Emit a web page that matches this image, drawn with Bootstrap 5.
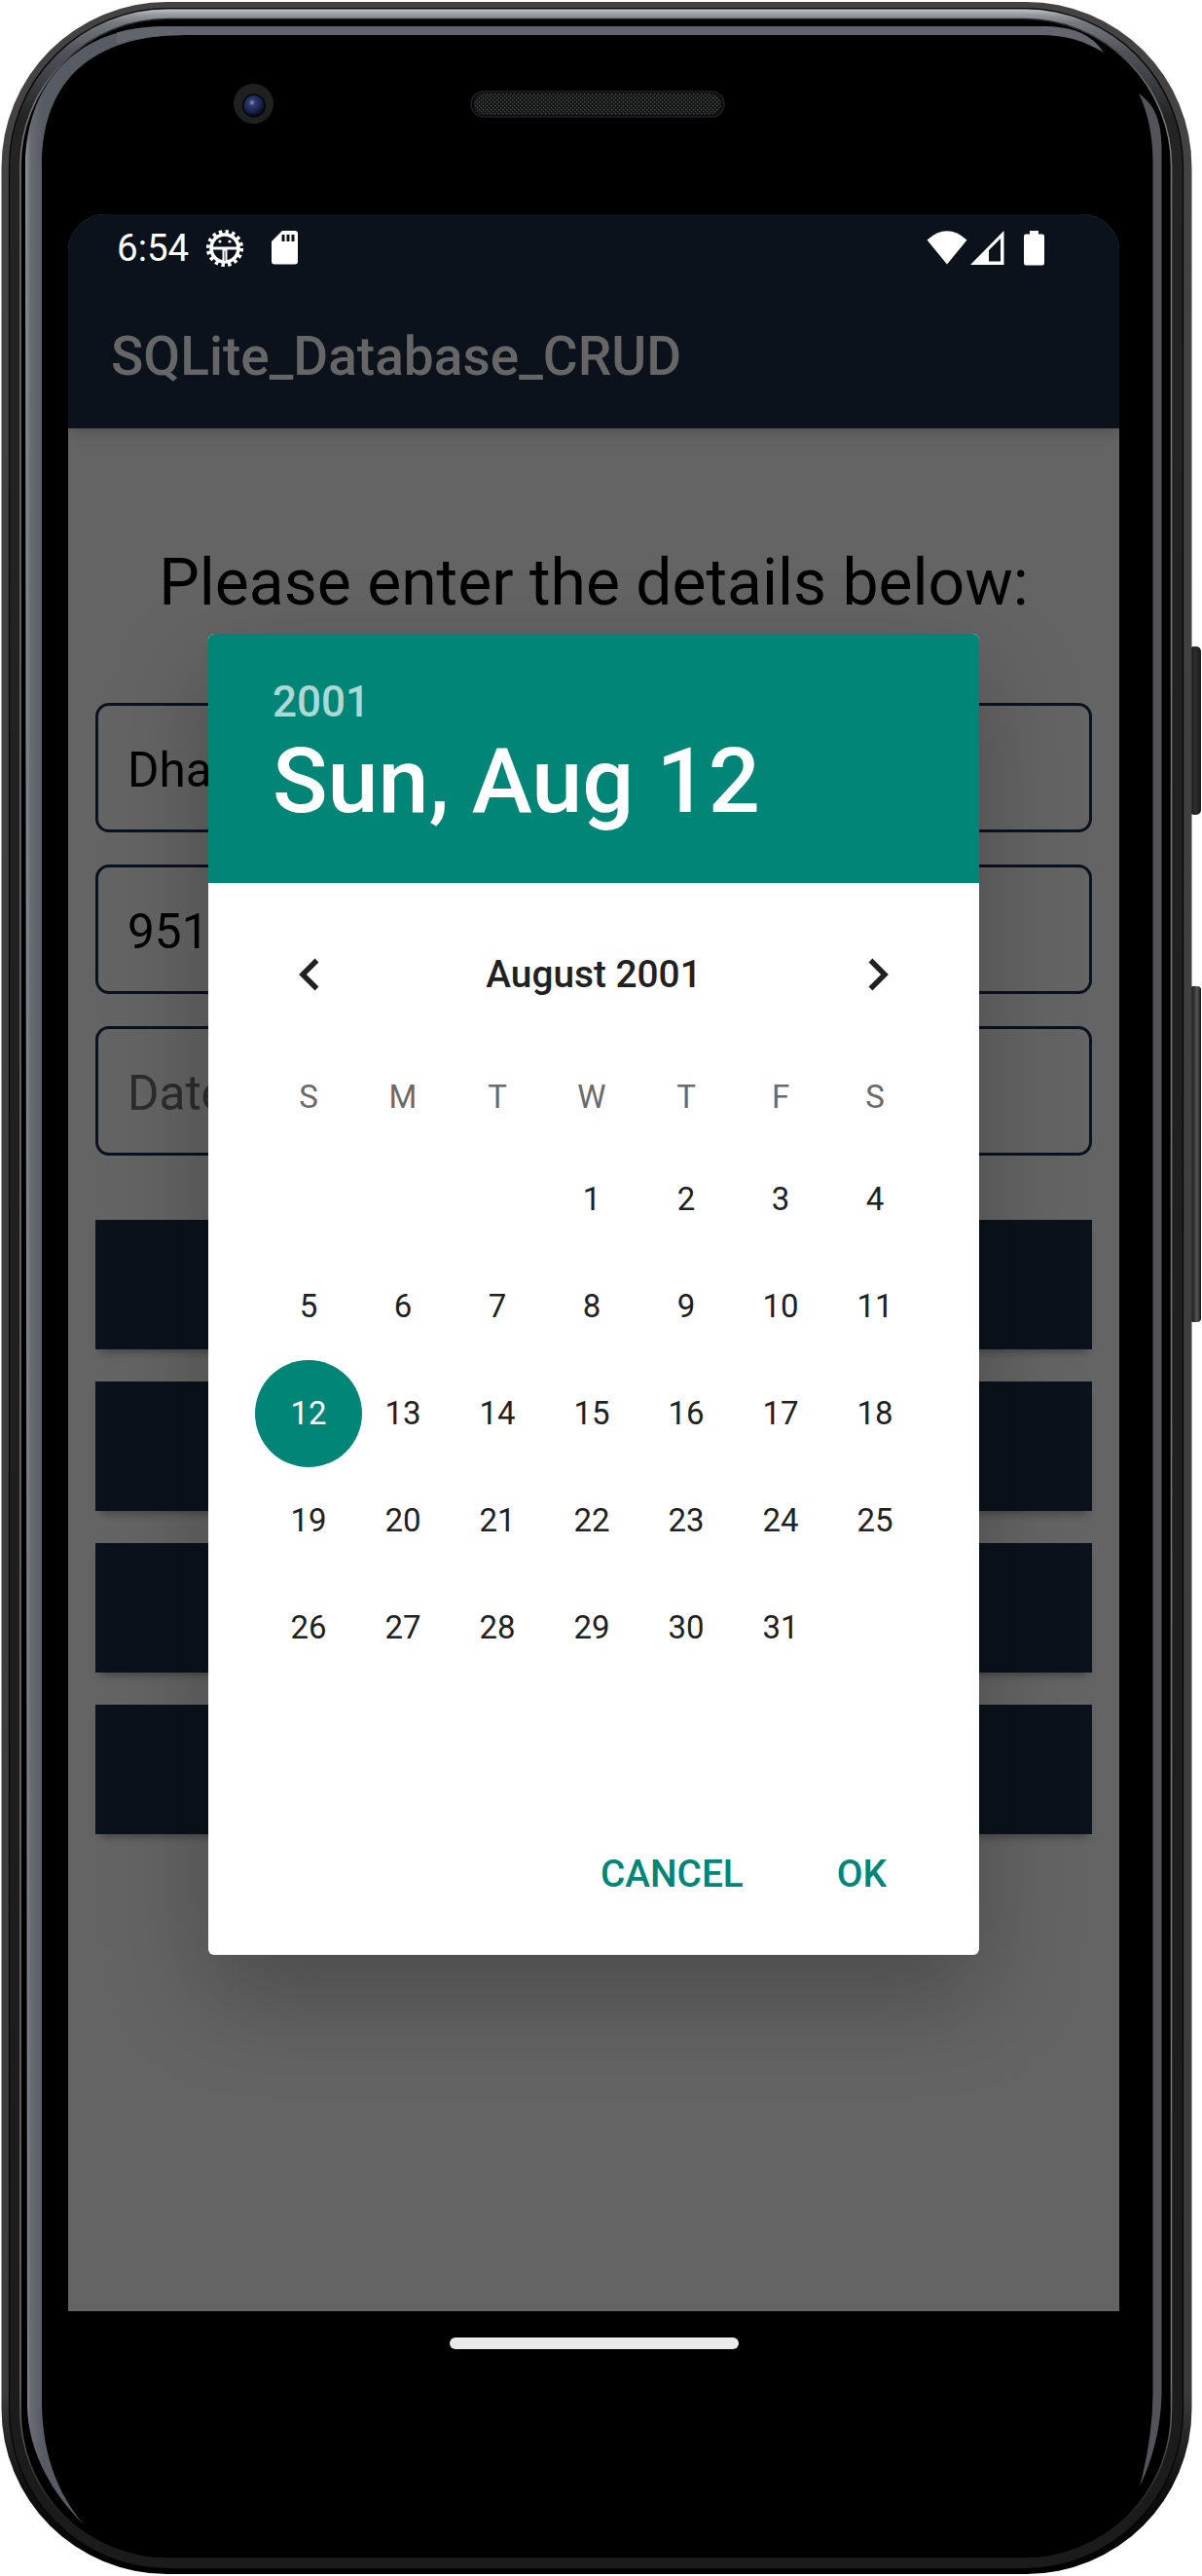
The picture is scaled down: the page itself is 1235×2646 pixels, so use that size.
<!DOCTYPE html>
<html lang="en">
<head>
<meta charset="utf-8">
<title>SQLite_Database_CRUD</title>
<link href="https://cdn.jsdelivr.net/npm/bootstrap@5.3.0/dist/css/bootstrap.min.css" rel="stylesheet">
<script src="https://cdn.jsdelivr.net/npm/bootstrap@5.3.0/dist/js/bootstrap.bundle.min.js"></script>
<style>
body{background:#fff;font-family:Roboto,"Liberation Sans",sans-serif;overflow:hidden}
.device{width:1235px;height:2646px;padding:220px 85px 0 70px;overflow:hidden}
.shell{left:0;top:0;width:1235px;height:2646px}
.screen{width:1080px;height:2154px;background:#646464;border-radius:38px 38px 0 0;overflow:hidden}
.appbar{background:#0b121b;height:220px;box-shadow:0 3px 14px rgba(0,0,0,.2);z-index:1}
.statusbar{height:66px;padding:3px 77px 0 50px;color:#fff;font-size:38.5px}
.gear{margin-left:17px}
.sd{margin-left:28px}
.brand{height:154px;padding:6px 44px 0;color:#666;font-size:55px;font-weight:500}
.content-pane{padding:119px 28px 0}
.prompt{font-size:66px;line-height:80px;margin-bottom:83px;color:#000;white-space:nowrap}
.field,.field:disabled{height:133px;border:3px solid #0b121f;border-radius:14px;background:transparent;color:#000;font-size:49.5px;padding:4px 30px 0;margin-bottom:33px}
.field::placeholder{color:#2c2c2c;opacity:1}
.action{height:133px;background:#0b121b;border:0;border-radius:0;box-shadow:0 8px 8px -5px rgba(0,0,0,.3);margin-top:33px}
.action:first-child{margin-top:66px}
.picker{left:214px;top:651px;width:792px;height:1357px;border-radius:6px;overflow:hidden;background:#fff;z-index:3}
.picker-shadow{left:214px;top:651px;width:792px;height:1357px;border-radius:6px;box-shadow:0 42px 100px rgba(0,0,0,.25);z-index:2}
.picker-head{height:256px;background:#008577;padding:44px 66px 0;color:#fff;font-weight:500}
.yr{font-size:44px;line-height:52px;color:rgba(255,255,255,.7)}
.dt{font-size:93.5px;line-height:110px;white-space:nowrap}
.month-nav{height:100px;margin-top:44px;padding:0 81px 0 81px;color:#212121;font-weight:500;font-size:38.8px}
.cal{display:grid;grid-template-columns:repeat(7,97px);padding-left:54.5px;font-size:33px;color:#212121}
.wk{height:50px;margin:51px 0 25px;color:#6a6a6a;line-height:50px;text-align:center}
.days{grid-auto-rows:110px}
.day{display:flex;align-items:center;justify-content:center}
.first-day{grid-column-start:4}
.picked{width:110px;height:110px;background:#008577;color:#fff}
.foot{height:171px;padding:4px 95px 0 0;gap:96px}
.foot .btn{font-size:38.8px;font-weight:500;color:#008577;line-height:60px}
.homebar{width:297px;height:12px;background:#eaeaea;margin:27px auto 0;border-radius:6px}
</style>
</head>
<body>
<div class="device position-relative">
<svg class="shell position-absolute" viewBox="0 0 1235 2646" aria-hidden="true">
<defs>
<linearGradient id="rim" x1="0" y1="0" x2="0" y2="1"><stop offset="0" stop-color="#454243"/><stop offset=".93" stop-color="#3d3a3a"/><stop offset=".965" stop-color="#101010"/><stop offset="1" stop-color="#000"/></linearGradient>
<linearGradient id="side" x1="0" y1="0" x2="0" y2="1"><stop offset="0" stop-color="#242424"/><stop offset="1" stop-color="#1b1b1b"/></linearGradient>
<linearGradient id="hair" x1="0" y1="0" x2="0" y2="1"><stop offset="0" stop-color="#222"/><stop offset=".03" stop-color="#77797c"/><stop offset=".93" stop-color="#77797c"/><stop offset=".985" stop-color="#1c1c1c"/></linearGradient>
<linearGradient id="shine" gradientUnits="userSpaceOnUse" x1="0" y1="9" x2="0" y2="120"><stop offset="0" stop-color="#c2c4c6"/><stop offset=".06" stop-color="#94979b"/><stop offset=".13" stop-color="#75787d"/><stop offset=".4" stop-color="#50535a"/><stop offset="1" stop-color="#242424"/></linearGradient>
<linearGradient id="band" gradientUnits="userSpaceOnUse" x1="26" y1="0" x2="44" y2="0"><stop offset="0" stop-color="#8f9196"/><stop offset=".3" stop-color="#686b73"/><stop offset="1" stop-color="#575b64"/></linearGradient>
<linearGradient id="key" x1="0" y1="0" x2="1" y2="0"><stop offset="0" stop-color="#111"/><stop offset=".35" stop-color="#2c2c2c"/><stop offset=".65" stop-color="#555"/><stop offset="1" stop-color="#161616"/></linearGradient>
<linearGradient id="key2" x1="0" y1="0" x2="1" y2="0"><stop offset="0" stop-color="#0c0c0c"/><stop offset=".5" stop-color="#2f2f2f"/><stop offset="1" stop-color="#1a1a1a"/></linearGradient>
<radialGradient id="lens" cx=".4" cy=".35" r=".65"><stop offset="0" stop-color="#8a94bd"/><stop offset=".25" stop-color="#2c3a70"/><stop offset=".7" stop-color="#17224d"/><stop offset="1" stop-color="#080c1c"/></radialGradient>
<pattern id="mesh" width="4" height="4" patternUnits="userSpaceOnUse"><rect width="4" height="4" fill="#141515"/><rect width="1.4" height="1.4" fill="#4c4e4d"/><rect x="2" y="2" width="1.4" height="1.4" fill="#424443"/></pattern>
</defs>
<rect x="1222" y="664" width="12" height="173" rx="5" fill="url(#key2)"/>
<rect x="1222" y="1013" width="12" height="345" rx="4" fill="url(#key)"/>
<rect x="1.5" y="2" width="1223" height="2642" rx="170" fill="url(#rim)"/>
<rect x="9.5" y="8.500" width="1206" height="2630" rx="163" fill="url(#side)" stroke="#050505" stroke-width="1.200"/>
<path d="M10.500 172A161 162.500 0 0 1 172 9.500H1054A161 162.500 0 0 1 1214.500 172H1203A150 150 0 0 0 1054 21H172A150 150 0 0 0 22 172Z" fill="url(#shine)"/>
<rect x="21" y="19.500" width="1182.500" height="2608.500" rx="151" fill="#000" stroke="url(#hair)" stroke-width="1.500"/>
<path d="M26 170C27 82 82 27 170 27H190V36C98 36 43 80 43 170V2470C44 2520 58 2560 86 2593C47 2555 28 2510 28 2470Z" fill="url(#band)"/>
<path d="M120 33.500Q143 27 170 27H1070C1101 27 1121 34 1134 54C1114 42 1096 36 1068 36H190Q150 36 120 45Z" fill="#63656c"/>
<path d="M1170 96C1184 106 1193 120 1193.500 150V2460Q1192 2510 1171 2554Q1184 2505 1184.500 2460V165Q1184 125 1170 96Z" fill="#53545a"/>
<rect x="484" y="94" width="260" height="26" rx="13" fill="#0b0b0d" stroke="#202126" stroke-width="1.500"/>
<rect x="487" y="96" width="254" height="22" rx="11" fill="url(#mesh)"/>
<circle cx="260.500" cy="106.500" r="20.500" fill="#202020"/><circle cx="261" cy="108.500" r="12" fill="#06070c"/><circle cx="261" cy="108.500" r="10.500" fill="url(#lens)"/>
</svg>

<main class="screen position-relative">
<header class="appbar position-relative">
<div class="statusbar d-flex align-items-center">
<span>6:54</span>
<svg class="gear" width="40" height="40" viewBox="-20 -20 40 40" fill="none" stroke="#fff"><circle r="14" stroke-width="3.600"/><circle r="17.200" stroke-width="3.800" stroke-dasharray="3.400 3.355"/><path d="M-14 0H14" stroke-width="3"/><path d="M0 0V15" stroke-width="5"/><path d="M0 2.500V13" stroke="#0b121b" stroke-width=".8"/><circle cx="-5" cy="-7" r="1.600" fill="#fff" stroke="none"/><circle cx="5" cy="-7" r="1.600" fill="#fff" stroke="none"/></svg>
<svg class="sd" width="28" height="35" viewBox="0 0 28 35"><path d="M11 0H24Q27 0 27 3V31.500Q27 34.500 24 34.500H3Q0 34.500 0 31.500V11Z" fill="#fff"/><path d="M10.500 4h3v7h-3zM15.500 4h3v7h-3zM20.500 4h3v7h-3z" fill="#0b121b"/></svg>
<svg class="ms-auto" width="121" height="36" viewBox="0 0 121 36" fill="#fff"><path d="M.5 9.500Q21-9 41.500 9.500L21 34.500Z"/><path d="M45 35L79.500 0V35Z"/><path d="M64 20L76 8V31.500H64Z" fill="#0b121b"/><path d="M106 0h9v3.500h4q2 0 2 2V33q0 2.500-2 2.500h-17q-2 0-2-2.500V5.500q0-2 2-2h4z"/></svg>
</div>
<div class="brand d-flex align-items-center">SQLite_Database_CRUD</div>
</header>
<section class="content-pane">
<div class="prompt text-center">Please enter the details below:</div>
<input class="form-control field" value="Dha">
<input class="form-control field" value="951">
<input class="form-control field mb-0" placeholder="Date">
<div class="d-flex flex-column">
<button class="btn action" type="button"></button>
<button class="btn action" type="button"></button>
<button class="btn action" type="button"></button>
<button class="btn action" type="button"></button>
</div>
</section>
</main>
<div class="homebar position-relative"></div>

<div class="picker-shadow position-absolute"></div>
<div class="picker position-absolute">
<div class="picker-head"><div class="yr">2001</div><div class="dt">Sun, Aug 12</div></div>
<div class="month-nav d-flex align-items-center justify-content-between">
<svg width="45" height="34" viewBox="0 0 45 34" fill="none" stroke="#212121" stroke-width="5.500"><path d="M30.500 2.500L16 17L30.500 31.500"/></svg>
<span>August 2001</span>
<svg width="45" height="34" viewBox="0 0 45 34" fill="none" stroke="#212121" stroke-width="5.500"><path d="M14.500 2.500L29 17L14.500 31.500"/></svg>
</div>
<div class="cal wk"><span>S</span><span>M</span><span>T</span><span>W</span><span>T</span><span>F</span><span>S</span></div>
<div class="cal days">
<span class="day first-day">1</span><span class="day">2</span><span class="day">3</span><span class="day">4</span>
<span class="day">5</span><span class="day">6</span><span class="day">7</span><span class="day">8</span><span class="day">9</span><span class="day">10</span><span class="day">11</span>
<span class="day"><span class="picked rounded-circle flex-shrink-0 d-flex align-items-center justify-content-center">12</span></span><span class="day">13</span><span class="day">14</span><span class="day">15</span><span class="day">16</span><span class="day">17</span><span class="day">18</span>
<span class="day">19</span><span class="day">20</span><span class="day">21</span><span class="day">22</span><span class="day">23</span><span class="day">24</span><span class="day">25</span>
<span class="day">26</span><span class="day">27</span><span class="day">28</span><span class="day">29</span><span class="day">30</span><span class="day">31</span><span class="day"></span>
<span class="day"></span>
</div>
<div class="foot d-flex align-items-center justify-content-end">
<button class="btn border-0 p-0" type="button">CANCEL</button>
<button class="btn border-0 p-0" type="button">OK</button>
</div>
</div>
</div>
</body>
</html>
